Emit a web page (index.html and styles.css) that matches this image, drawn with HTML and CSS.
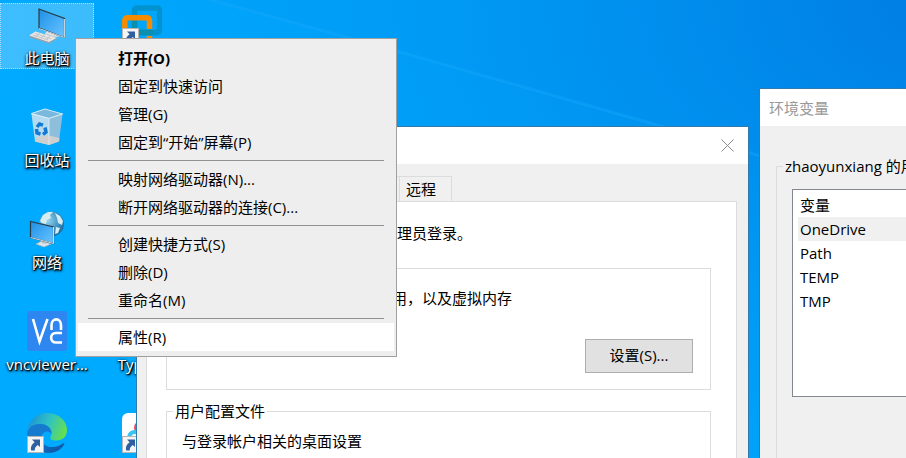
FILE: index.html
```html
<!DOCTYPE html>
<html lang="zh-CN">
<head>
  <meta charset="UTF-8" />
  <meta name="viewport" content="width=device-width, initial-scale=1.0"/>
  <title>桌面</title>
  <link rel="stylesheet" href="styles.css">
</head>
<body>

  <main class="desktop">
    <svg class="rays" viewBox="0 0 906 458" preserveAspectRatio="none" aria-hidden="true">
      <path d="M208 0 L660 125 L906 205 V0 Z" fill="#0068d0" opacity="0.03"/>
      <path d="M208 -1 L400 52 L664 127 L770 159" fill="none" stroke="#1fb0ff" stroke-width="3" opacity="0.3"/>
    </svg>

    <!-- shared shortcut arrow -->
    <svg class="defs" width="0" height="0" aria-hidden="true">
      <symbol id="shortcut" viewBox="0 0 17 17">
        <rect x="0.5" y="0.5" width="16" height="16" fill="#f5f5f5" stroke="#b5b5b5"/>
        <path d="M5 3.5 H13 V11 L10.8 9 C8.5 10.5 7.6 12 7.8 14.5 H4.2 C3.2 11.5 4.5 8.6 7.6 6.3 Z" fill="#2f5f9f"/>
      </symbol>
    </svg>

    <div class="icons">
      <button class="icon selected">
        <svg viewBox="0 0 40 40" aria-hidden="true">
          <defs>
            <linearGradient id="screen" x1="0" y1="0" x2="1" y2="1">
              <stop offset="0" stop-color="#1f8fe0"/>
              <stop offset="0.5" stop-color="#43abf5"/>
              <stop offset="1" stop-color="#6cc4ff"/>
            </linearGradient>
          </defs>
          <path d="M18 28 L24 25 L34 29 L34 31 L27 33 L18 30 Z" fill="#c9ced2"/>
          <path d="M18 28 L24 25 L34 29 L27 31 Z" fill="#e3e6e8"/>
          <path d="M12 4 L37.500 13.500 V32.500 L12 23 Z" fill="url(#screen)" stroke="#2b3a45" stroke-width="1.200"/>
          <path d="M37.500 14 V32.500 L12 23.500" fill="none" stroke="#c5d2da"/>
          <path d="M2 30.500 L8.500 26.500 L29.500 33 L22 38 Z" fill="#e6e6e6"/>
          <path d="M2 30.500 L22 37 L29.500 33 V34 L22 38.500 L2 32 Z" fill="#9b9fa3"/>
          <path d="M6 30 L21 35 M8 28.500 L24 33.800 M9 31.500 L13 27.500 M14 33 L18 29 M19 35 L23 31" stroke="#b3b7ba" stroke-width="0.7"/>
        </svg>
        <span>此电脑</span>
      </button>

      <button class="icon">
        <svg viewBox="0 0 40 40" aria-hidden="true">
          <path d="M4.500 6.500 L18 2 L35.500 7 L22 11.500 Z" fill="#7ab9dd" stroke="#d6ecf7"/>
          <path d="M4.500 7 L22 11.500 L22 38 L8 34.500 Z" fill="#b4dbf0"/>
          <path d="M22 11.500 L35.500 7 L32 34.500 L22 38 Z" fill="#8dbfdc"/>
          <path d="M8 31 L20 28 L32.500 31 L32 34.500 L22 38 L8 34.500 Z" fill="#cfcfd0"/>
          <path d="M4.500 7 L22 11.500 L35.500 7 M22 11.500 V37.500" fill="none" stroke="#dcf0f9" stroke-width="0.8"/>
          <g fill="none" stroke="#1579d2" stroke-width="3.500">
            <path d="M10 20 L12.500 17 L16 18.200"/>
            <path d="M18 20.500 L19 25 L16 27.500"/>
            <path d="M13.500 27 L10 26 L9.500 22"/>
          </g>
        </svg>
        <span>回收站</span>
      </button>

      <button class="icon">
        <svg viewBox="0 0 40 40" aria-hidden="true">
          <defs>
            <radialGradient id="globe" cx="0.35" cy="0.35" r="0.7">
              <stop offset="0" stop-color="#9ad4ee"/>
              <stop offset="0.6" stop-color="#4498c6"/>
              <stop offset="1" stop-color="#1f6b9e"/>
            </radialGradient>
          </defs>
          <circle cx="24.500" cy="15" r="12.500" fill="url(#globe)"/>
          <path d="M13 12 L16 6 L21 3 L26 3 L23 6 L24 9 L20 11 L19 15 L15 14 Z M28 4 L33 7 L36 12 L35 16 L31 14 L30 9 Z M29 18 L33 19 L31 24 L28 25 Z" fill="#d3edf3"/>
          <path d="M9 35 L15 32 L24 35 L17 38 Z" fill="#dfe3e6" stroke="#a7afb5" stroke-width="0.6"/>
          <path d="M15 30 L19 31 V35 L15 34 Z" fill="#b9c0c5"/>
          <path d="M3.500 12.500 L26.500 18 V34.500 L3.500 28.500 Z" fill="url(#screen)" stroke="#2b3a45" stroke-width="1.200"/>
          <path d="M26.500 18 V34.500 L3.500 28.500" fill="none" stroke="#d0dce3"/>
        </svg>
        <span>网络</span>
      </button>

      <button class="icon">
        <svg viewBox="0 0 40 40" aria-hidden="true">
          <rect width="40" height="40" rx="3" fill="#2e86f0"/>
          <g fill="none" stroke="#fff" stroke-width="2.600">
            <path d="M6 8 L12.500 30.500 L20.500 8"/>
            <path d="M24.500 19 V14 C24.500 6.500 34 6.500 34 14 V19"/>
            <path d="M35 22 H29 C22.500 22 22.500 31.500 29 31.500 H35"/>
          </g>
        </svg>
        <span>vncviewer...</span>
      </button>

      <button class="icon" aria-label="Microsoft Edge">
        <svg viewBox="0 0 40 40" aria-hidden="true">
          <defs>
            <linearGradient id="edgeTop" x1="0" y1="0.3" x2="1" y2="0.6">
              <stop offset="0" stop-color="#1c8fd6"/>
              <stop offset="0.5" stop-color="#2fc2c4"/>
              <stop offset="1" stop-color="#67e04c"/>
            </linearGradient>
            <linearGradient id="edgeLow" x1="0" y1="0" x2="1" y2="1">
              <stop offset="0" stop-color="#1583d8"/>
              <stop offset="1" stop-color="#0c4f9e"/>
            </linearGradient>
          </defs>
          <path d="M0 19 C1 8 9 0 20 0 C32 0 40 8 40 17 C40 24 35 27.500 29.500 27.500 C25 27.500 22.500 26 23.500 24 C26 20 24 12 14 11 C7 11 2 14 0 19 Z" fill="url(#edgeTop)"/>
          <path d="M0 20 C2 13 8 10.500 14 11 C21 11.500 25 16 24.500 21 C22 17 16 18 14.500 23 C13 31 20 38 28 38.500 C25 40 22 40 20 40 C9 40 0 31 0 20 Z" fill="#167bcf"/>
          <path d="M15 21 C12 27 17 34 25 34 C30 34 34 32 36.500 30 C38 30 37.500 31.500 36.500 32.500 C32 39 24 41 18 39 C10 36 9 26 15 21 Z" fill="url(#edgeLow)"/>
          <use href="#shortcut" x="0" y="23" width="17" height="17"/>
        </svg>
      </button>

      <button class="icon" aria-label="VMware">
        <svg viewBox="0 0 40 40" aria-hidden="true">
          <rect x="12.500" y="3" width="25" height="24.500" rx="2" fill="none" stroke="#0093cf" stroke-width="5.500"/>
          <path d="M2.800 40 V16 Q2.800 12.800 6 12.800 H24.500 Q27.500 12.800 27.500 16 V24" fill="none" stroke="#f68b00" stroke-width="5.500"/>
          <path d="M12.500 16 V24.500 Q12.500 27.500 15.500 27.500 H31" fill="none" stroke="#0a8fae" stroke-width="5.500"/>
          <path d="M27.500 31 V40" stroke="#f68b00" stroke-width="5.500"/>
          <use href="#shortcut" x="0" y="23" width="17" height="17"/>
        </svg>
      </button>

      <button class="icon row-four">
        <svg viewBox="0 0 40 40" aria-hidden="true">
          <rect width="40" height="40" rx="4" fill="#fff"/>
        </svg>
        <span>Typora</span>
      </button>

      <button class="icon" aria-label="网盘">
        <svg viewBox="0 0 40 40" aria-hidden="true">
          <rect width="40" height="40" rx="6" fill="#fff"/>
          <circle cx="20" cy="15" r="6" fill="none" stroke="#f2495c" stroke-width="4"/>
          <path d="M7 26 C7 19 12 18 16 20" fill="none" stroke="#3cc4f5" stroke-width="4"/>
          <use href="#shortcut" x="0" y="23" width="17" height="17"/>
        </svg>
      </button>
    </div>

    <section class="window system">
      <header class="titlebar">
        <button class="close" aria-label="关闭">
          <svg viewBox="0 0 13 13" aria-hidden="true">
            <path d="M0.500 0.500 L12.500 12.500 M12.500 0.500 L0.500 12.500" stroke="#8a8a8a"/>
          </svg>
        </button>
      </header>
      <div class="tabs">
        <button>计算机名</button>
        <button>硬件</button>
        <button>高级</button>
        <button>系统保护</button>
        <button>远程</button>
      </div>
      <div class="panel">
        <p class="notice">要进行大多数更改，你必须作为管理员登录。</p>
        <div class="group performance">
          <p>视觉效果，处理器计划，内存使用，以及虚拟内存</p>
          <button class="push">设置(S)...</button>
        </div>
        <div class="group profiles">
          <h3>用户配置文件</h3>
          <p>与登录帐户相关的桌面设置</p>
        </div>
      </div>
    </section>

    <section class="window environment">
      <header class="titlebar">环境变量</header>
      <div class="group">
        <h3>zhaoyunxiang 的用户变量(U)</h3>
        <div class="list">
          <table>
            <thead>
              <tr><th>变量</th></tr>
            </thead>
            <tbody>
              <tr class="current"><td>OneDrive</td></tr>
              <tr><td>Path</td></tr>
              <tr><td>TEMP</td></tr>
              <tr><td>TMP</td></tr>
            </tbody>
          </table>
        </div>
      </div>
    </section>

    <div class="menu" role="menu">
      <button role="menuitem" class="default">打开(O)</button>
      <button role="menuitem">固定到快速访问</button>
      <button role="menuitem">管理(G)</button>
      <button role="menuitem">固定到“开始”屏幕(P)</button>
      <hr>
      <button role="menuitem">映射网络驱动器(N)...</button>
      <button role="menuitem">断开网络驱动器的连接(C)...</button>
      <hr>
      <button role="menuitem">创建快捷方式(S)</button>
      <button role="menuitem">删除(D)</button>
      <button role="menuitem">重命名(M)</button>
      <hr>
      <button role="menuitem" class="active">属性(R)</button>
    </div>
  </main>

</body>
</html>
```

FILE: styles.css
```css
* {
  box-sizing: border-box;
}

body {
  margin: 0;
  font-family: "Open Sans", "Noto Sans CJK SC", sans-serif;
  font-size: 15px;
  line-height: 22px;
  color: #000;
}

button {
  font: inherit;
  color: inherit;
  padding: 0;
  border: none;
  background: none;
}

h3, p {
  margin: 0;
  font-size: 15px;
  font-weight: normal;
}

.desktop {
  position: relative;
  height: 100vh;
  overflow: hidden;
  background: radial-gradient(ellipse 110% 150% at 105% 0, #007ee3 0%, #008eed 25%, #009bf5 50%, #00a4fa 72%, #00abff 100%);
}

.rays {
  position: absolute;
  width: 100%;
  height: 100%;
}

.defs {
  position: absolute;
}

/* desktop icons */
.icons {
  position: relative;
  display: grid;
  grid-template-rows: repeat(5, 66px);
  grid-auto-flow: column;
  grid-auto-columns: 94px;
  justify-content: start;
  gap: 36px 1px;
  padding-top: 3px;
}

.icon {
  display: flex;
  flex-direction: column;
  align-items: center;
  gap: 2px;
  padding-top: 2px;
  color: #fff;
  text-shadow: 1px 1px 1px #000, 0 1px 3px #000, 1px 1px 3px #000;
}

.icon svg {
  width: 40px;
  height: 40px;
}

.icon.selected {
  background: rgba(255, 255, 255, 0.24);
  outline: 1px dotted #a9dcff;
  outline-offset: -1px;
}

.row-four {
  grid-row: 4;
}

/* windows */
.window {
  position: absolute;
  background: #f0f0f0;
  border: 1px solid #3379ab;
}

.titlebar {
  display: flex;
  align-items: center;
  height: 37px;
  background: #fff;
}

.group {
  border: 1px solid #dcdcdc;
}

.group h3 {
  width: max-content;
  margin: -12px 0 0 6px;
  padding: 0 2px;
}

.system {
  top: 126px;
  left: 136px;
  width: 613px;
  height: 500px;
}

.system .titlebar {
  justify-content: flex-end;
  padding-right: 14px;
}

.close {
  display: flex;
}

.close svg {
  width: 13px;
  height: 13px;
}

.tabs {
  display: grid;
  grid-template-columns: 77px 48px 48px 80px 53px;
  padding: 12px 9px 0;
}

.tabs button {
  height: 25px;
  padding-left: 6px;
  text-align: left;
  border: 1px solid #dcdcdc;
  border-bottom: none;
  border-right: none;
}

.tabs button:last-child {
  border-right: 1px solid #dcdcdc;
}

.panel {
  height: 400px;
  margin: 0 11px 0 9px;
  padding: 20px 25px 0 19px;
  background: #fff;
  border: 1px solid #dcdcdc;
}

.panel .group {
  padding: 0 15px;
}

.panel .group h3 {
  margin-left: -9px;
  background: #fff;
}

.notice {
  margin-bottom: 24px;
  padding-left: 6px;
}

.performance {
  display: flex;
  flex-direction: column;
  justify-content: space-between;
  height: 122px;
  margin-bottom: 21px;
}

.panel .performance {
  padding: 18px 17px 16px 15px;
}

.profiles {
  height: 122px;
}

.push {
  align-self: flex-end;
  width: 108px;
  height: 34px;
  padding-bottom: 2px;
  background: #e1e1e1;
  border: 1px solid #adadad;
}

.panel h3 + p {
  margin-top: 8px;
}

.environment {
  top: 88px;
  left: 759px;
  width: 640px;
  height: 660px;
}

.environment .titlebar {
  padding-left: 9px;
  color: #999;
}

.environment .group {
  height: 360px;
  margin: 40px 16px 0;
  padding: 0 15px;
}

.environment .group h3 {
  margin-left: -9px;
  background: #f0f0f0;
}

.list {
  height: 208px;
  margin-top: 12px;
  padding: 3px 5px;
  background: #fff;
  border: 1px solid #828790;
}

.list table {
  width: 100%;
  border-collapse: collapse;
}

.list th,
.list td {
  height: 24px;
  padding: 0 2px;
  font-weight: normal;
  text-align: left;
}

.list .current {
  background: #f0f0f0;
}

/* context menu */
.menu {
  position: absolute;
  top: 38px;
  left: 75px;
  width: 322px;
  padding: 5px 2px;
  background: #eee;
  border: 1px solid #a0a0a0;
}

.menu button {
  display: block;
  width: 100%;
  height: 28px;
  padding-left: 40px;
  text-align: left;
}

.menu hr {
  height: 1px;
  margin: 4px 10px;
  border: none;
  background: #919191;
}

.menu .default {
  font-weight: bold;
}

.menu .active {
  background: #fff;
}
```
